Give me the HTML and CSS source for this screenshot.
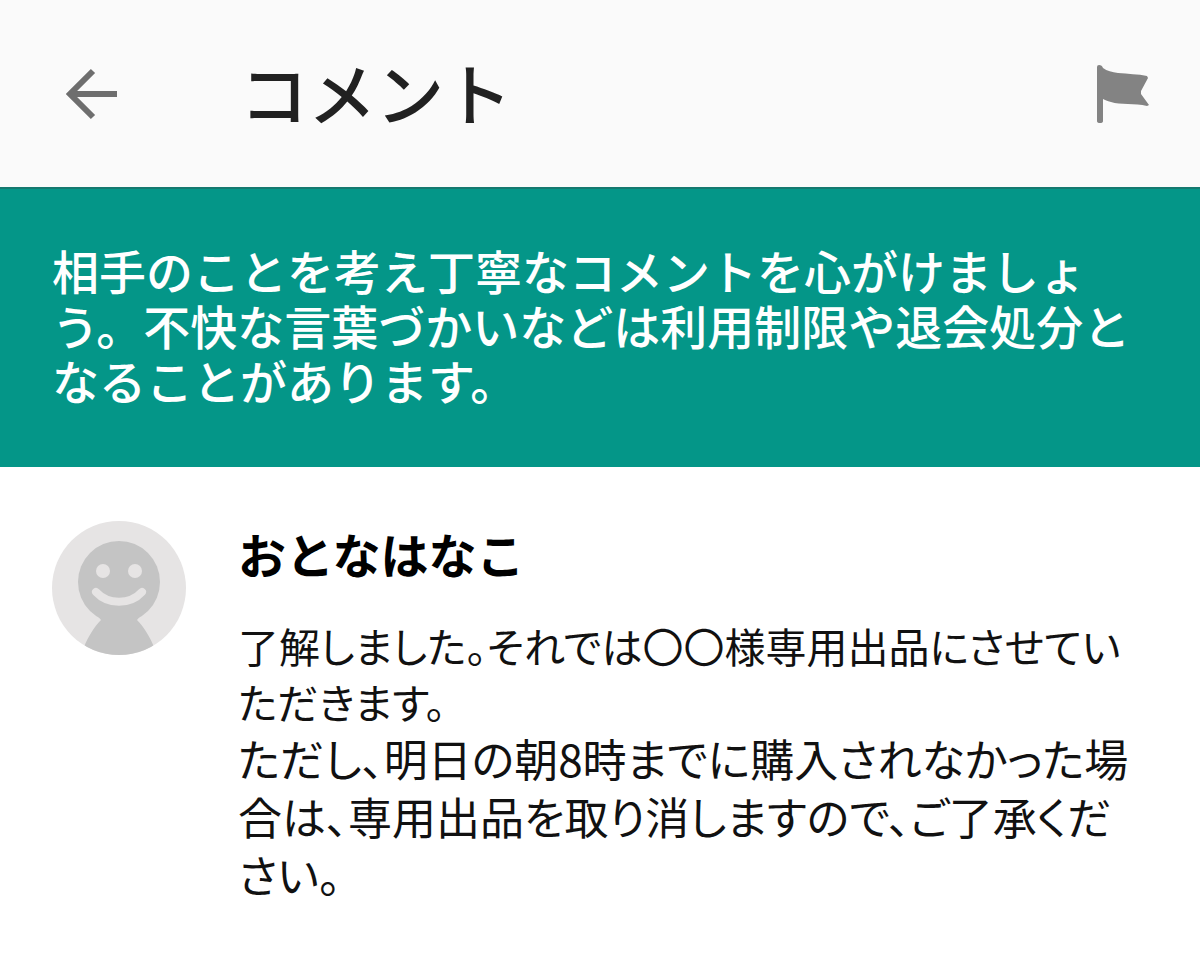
FILE: index.html
```html
<!DOCTYPE html>
<html lang="ja">
<head>
  <meta charset="UTF-8">
  <meta name="viewport" content="width=device-width, initial-scale=1.0">
  <title>コメント</title>
  <link rel="stylesheet" href="styles.css">
</head>
<body>
  <header class="app-bar">
    <button type="button" class="icon-btn back-btn" aria-label="戻る">
      <svg width="56" height="56" viewBox="0 0 56 56">
        <path d="M52 28H5M28 5L5 28l23 23" fill="none" stroke="#6e6e6e" stroke-width="6"/>
      </svg>
    </button>
    <h1>コメント</h1>
    <button type="button" class="icon-btn flag-btn" aria-label="報告する">
      <svg width="54" height="60" viewBox="0 0 54 60">
        <path d="M1 3q0-2 2-2 3 0 4 3c4 3 9 4 15 5 10 1 20 1 29 3l1 2-7 13v3l8 11-2 1c-12-3-27-1-36-4-4-1-6-2-8-3v22q0 2-3 2-3 0-3-2z" fill="#838383"/>
      </svg>
    </button>
  </header>
  <p class="notice">相手のことを考え丁寧なコメントを心がけましょう。不快な言葉づかいなどは利用制限や退会処分となることがあります。</p>
  <main class="comments">
    <article class="comment">
      <svg class="avatar" width="134" height="134" viewBox="0 0 134 134">
        <clipPath id="avatarClip"><circle cx="67" cy="67" r="67"/></clipPath>
        <circle cx="67" cy="67" r="67" fill="#e6e4e4"/>
        <g clip-path="url(#avatarClip)">
          <circle cx="67" cy="61" r="41" fill="#c4c4c4"/>
          <path d="M32 134v-8c4-10 10-20 17-27l-5-6h46l-5 6c7 7 13 17 17 27v8z" fill="#c4c4c4"/>
        </g>
        <circle cx="51" cy="50" r="7" fill="#e6e4e4"/>
        <circle cx="83" cy="50" r="7" fill="#e6e4e4"/>
        <path d="M44 71c12 13 34 13 46 0" fill="none" stroke="#e6e4e4" stroke-width="8" stroke-linecap="round"/>
      </svg>
      <div class="comment-body">
        <h2>おとなはなこ</h2>
        <p>了解しました。それでは〇〇様専用出品にさせていただきます。</p>
        <p class="note">ただし、明日の朝8時までに購入されなかった場合は、専用出品を取り消しますので、ご了承ください。</p>
      </div>
    </article>
  </main>
</body>
</html>
```
FILE: styles.css
```css
* {
  box-sizing: border-box;
}
body {
  margin: 0;
  background: #fff;
  color: #111;
  font-family: "Noto Sans CJK JP", sans-serif;
}
h1,
h2,
p {
  margin: 0;
}
.app-bar {
  display: flex;
  align-items: center;
  padding: 50px 50px 54px 65px;
  background: #fafafa;
}
.icon-btn {
  display: flex;
  padding: 4px 0 0;
  border: none;
  background: none;
  cursor: pointer;
}
.app-bar h1 {
  flex: 1;
  margin-left: 119px;
  font-size: 68px;
  font-weight: 500;
  line-height: 83px;
  color: #212121;
}
.notice {
  padding: 53px 52px 60px;
  border-top: 2px solid #14796f;
  background: #049688;
  color: #fff;
  font-size: 47px;
  font-weight: 500;
  line-height: 55px;
}
.comment {
  display: flex;
  align-items: flex-start;
  gap: 52px;
  padding: 54px 60px 54px 52px;
}
.avatar {
  flex: none;
}
.comment-body {
  flex: 1;
}
.comment h2 {
  margin-bottom: 32px;
  font-size: 48px;
  font-weight: 700;
  line-height: 64px;
  color: #000;
}
.comment p {
  font-feature-settings: "palt";
  font-size: 41px;
  line-height: 56px;
}
.comment .note {
  font-size: 44px;
  line-height: 58px;
}
```
